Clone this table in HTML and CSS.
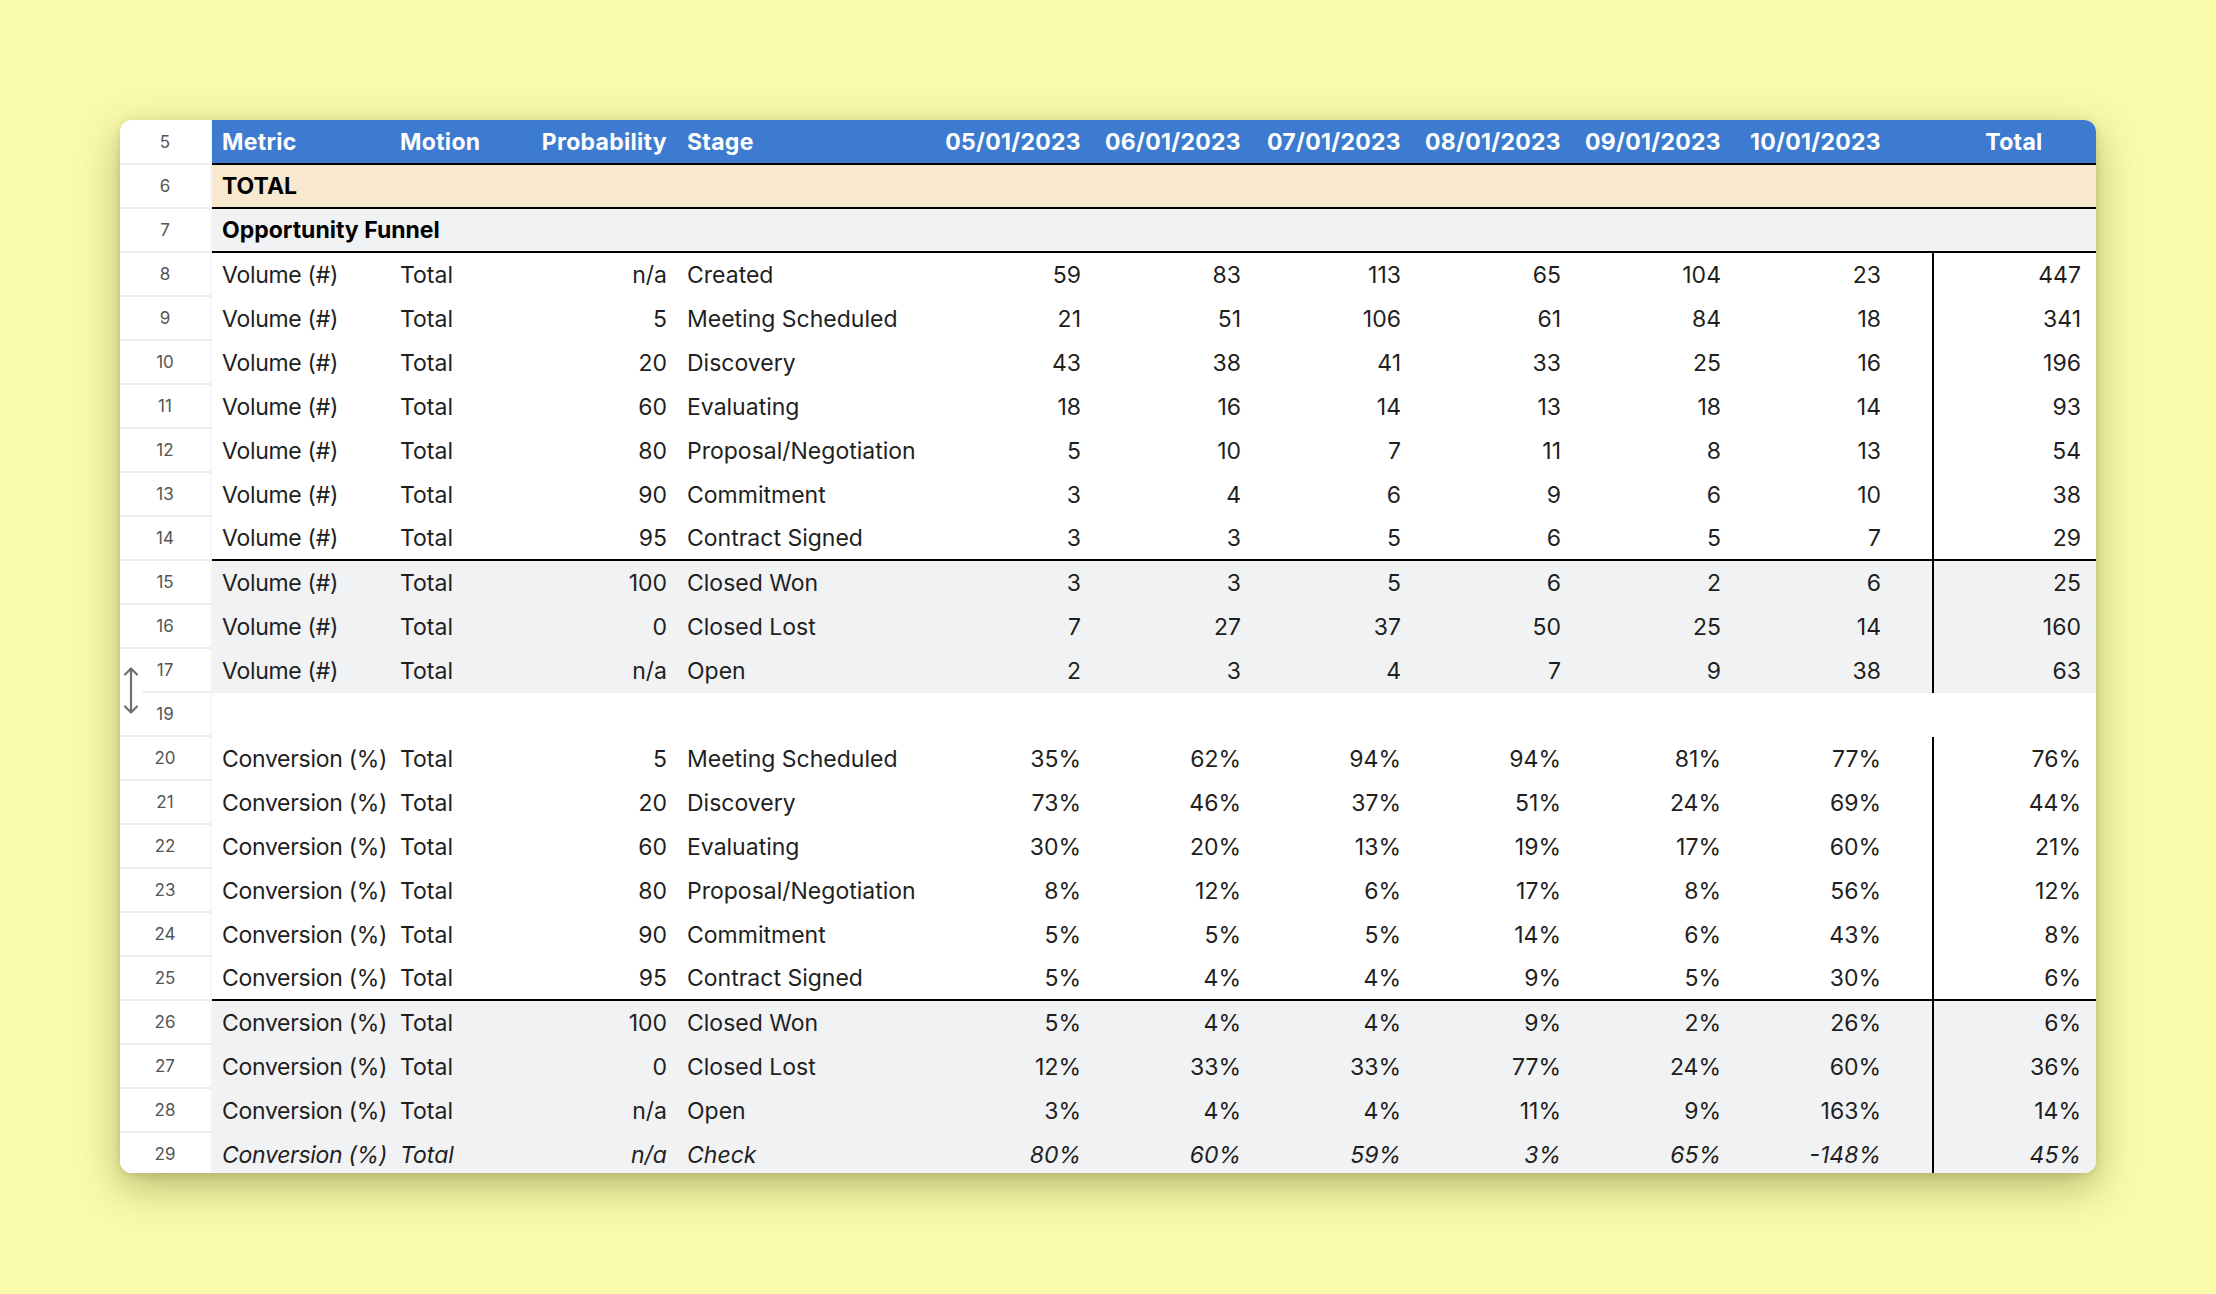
FILE: index.html
```html
<!DOCTYPE html>
<html lang="en">
<head>
<meta charset="utf-8">
<title>Opportunity Funnel</title>
<link rel="stylesheet" href="styles.css">
</head>
<body>
<div class="card">
  <div class="row head">
    <div class="num">5</div>
    <div class="cells">
      <div class="c">Metric</div><div class="c">Motion</div><div class="c r">Probability</div><div class="c">Stage</div>
      <div class="c r">05/01/2023</div><div class="c r">06/01/2023</div><div class="c r">07/01/2023</div><div class="c r">08/01/2023</div><div class="c r">09/01/2023</div><div class="c r">10/01/2023</div><div class="c"></div><div class="c ctr">Total</div>
    </div>
  </div>
  <div class="row">
    <div class="num">6</div>
    <div class="cells beige line"><div class="c b">TOTAL</div></div>
  </div>
  <div class="row">
    <div class="num">7</div>
    <div class="cells gray line"><div class="c b wide">Opportunity Funnel</div></div>
  </div>

  <div class="row"><div class="num">8</div><div class="cells"><div class="c m">Volume (#)</div><div class="c">Total</div><div class="c r">n/a</div><div class="c">Created</div><div class="c r">59</div><div class="c r">83</div><div class="c r">113</div><div class="c r">65</div><div class="c r">104</div><div class="c r">23</div><div class="c"></div><div class="c r tot">447</div></div></div>
  <div class="row"><div class="num">9</div><div class="cells"><div class="c m">Volume (#)</div><div class="c">Total</div><div class="c r">5</div><div class="c">Meeting Scheduled</div><div class="c r">21</div><div class="c r">51</div><div class="c r">106</div><div class="c r">61</div><div class="c r">84</div><div class="c r">18</div><div class="c"></div><div class="c r tot">341</div></div></div>
  <div class="row"><div class="num">10</div><div class="cells"><div class="c m">Volume (#)</div><div class="c">Total</div><div class="c r">20</div><div class="c">Discovery</div><div class="c r">43</div><div class="c r">38</div><div class="c r">41</div><div class="c r">33</div><div class="c r">25</div><div class="c r">16</div><div class="c"></div><div class="c r tot">196</div></div></div>
  <div class="row"><div class="num">11</div><div class="cells"><div class="c m">Volume (#)</div><div class="c">Total</div><div class="c r">60</div><div class="c">Evaluating</div><div class="c r">18</div><div class="c r">16</div><div class="c r">14</div><div class="c r">13</div><div class="c r">18</div><div class="c r">14</div><div class="c"></div><div class="c r tot">93</div></div></div>
  <div class="row"><div class="num">12</div><div class="cells"><div class="c m">Volume (#)</div><div class="c">Total</div><div class="c r">80</div><div class="c">Proposal/Negotiation</div><div class="c r">5</div><div class="c r">10</div><div class="c r">7</div><div class="c r">11</div><div class="c r">8</div><div class="c r">13</div><div class="c"></div><div class="c r tot">54</div></div></div>
  <div class="row"><div class="num">13</div><div class="cells"><div class="c m">Volume (#)</div><div class="c">Total</div><div class="c r">90</div><div class="c">Commitment</div><div class="c r">3</div><div class="c r">4</div><div class="c r">6</div><div class="c r">9</div><div class="c r">6</div><div class="c r">10</div><div class="c"></div><div class="c r tot">38</div></div></div>
  <div class="row"><div class="num">14</div><div class="cells line"><div class="c m">Volume (#)</div><div class="c">Total</div><div class="c r">95</div><div class="c">Contract Signed</div><div class="c r">3</div><div class="c r">3</div><div class="c r">5</div><div class="c r">6</div><div class="c r">5</div><div class="c r">7</div><div class="c"></div><div class="c r tot">29</div></div></div>
  <div class="row"><div class="num">15</div><div class="cells gray"><div class="c m">Volume (#)</div><div class="c">Total</div><div class="c r">100</div><div class="c">Closed Won</div><div class="c r">3</div><div class="c r">3</div><div class="c r">5</div><div class="c r">6</div><div class="c r">2</div><div class="c r">6</div><div class="c"></div><div class="c r tot">25</div></div></div>
  <div class="row"><div class="num">16</div><div class="cells gray"><div class="c m">Volume (#)</div><div class="c">Total</div><div class="c r">0</div><div class="c">Closed Lost</div><div class="c r">7</div><div class="c r">27</div><div class="c r">37</div><div class="c r">50</div><div class="c r">25</div><div class="c r">14</div><div class="c"></div><div class="c r tot">160</div></div></div>
  <div class="row"><div class="num">17</div><div class="cells gray"><div class="c m">Volume (#)</div><div class="c">Total</div><div class="c r">n/a</div><div class="c">Open</div><div class="c r">2</div><div class="c r">3</div><div class="c r">4</div><div class="c r">7</div><div class="c r">9</div><div class="c r">38</div><div class="c"></div><div class="c r tot">63</div></div></div>
  <div class="row"><div class="num">19</div><div class="cells"></div></div>

  <div class="row"><div class="num">20</div><div class="cells"><div class="c m">Conversion (%)</div><div class="c">Total</div><div class="c r">5</div><div class="c">Meeting Scheduled</div><div class="c r">35%</div><div class="c r">62%</div><div class="c r">94%</div><div class="c r">94%</div><div class="c r">81%</div><div class="c r">77%</div><div class="c"></div><div class="c r tot">76%</div></div></div>
  <div class="row"><div class="num">21</div><div class="cells"><div class="c m">Conversion (%)</div><div class="c">Total</div><div class="c r">20</div><div class="c">Discovery</div><div class="c r">73%</div><div class="c r">46%</div><div class="c r">37%</div><div class="c r">51%</div><div class="c r">24%</div><div class="c r">69%</div><div class="c"></div><div class="c r tot">44%</div></div></div>
  <div class="row"><div class="num">22</div><div class="cells"><div class="c m">Conversion (%)</div><div class="c">Total</div><div class="c r">60</div><div class="c">Evaluating</div><div class="c r">30%</div><div class="c r">20%</div><div class="c r">13%</div><div class="c r">19%</div><div class="c r">17%</div><div class="c r">60%</div><div class="c"></div><div class="c r tot">21%</div></div></div>
  <div class="row"><div class="num">23</div><div class="cells"><div class="c m">Conversion (%)</div><div class="c">Total</div><div class="c r">80</div><div class="c">Proposal/Negotiation</div><div class="c r">8%</div><div class="c r">12%</div><div class="c r">6%</div><div class="c r">17%</div><div class="c r">8%</div><div class="c r">56%</div><div class="c"></div><div class="c r tot">12%</div></div></div>
  <div class="row"><div class="num">24</div><div class="cells"><div class="c m">Conversion (%)</div><div class="c">Total</div><div class="c r">90</div><div class="c">Commitment</div><div class="c r">5%</div><div class="c r">5%</div><div class="c r">5%</div><div class="c r">14%</div><div class="c r">6%</div><div class="c r">43%</div><div class="c"></div><div class="c r tot">8%</div></div></div>
  <div class="row"><div class="num">25</div><div class="cells line"><div class="c m">Conversion (%)</div><div class="c">Total</div><div class="c r">95</div><div class="c">Contract Signed</div><div class="c r">5%</div><div class="c r">4%</div><div class="c r">4%</div><div class="c r">9%</div><div class="c r">5%</div><div class="c r">30%</div><div class="c"></div><div class="c r tot">6%</div></div></div>
  <div class="row"><div class="num">26</div><div class="cells gray"><div class="c m">Conversion (%)</div><div class="c">Total</div><div class="c r">100</div><div class="c">Closed Won</div><div class="c r">5%</div><div class="c r">4%</div><div class="c r">4%</div><div class="c r">9%</div><div class="c r">2%</div><div class="c r">26%</div><div class="c"></div><div class="c r tot">6%</div></div></div>
  <div class="row"><div class="num">27</div><div class="cells gray"><div class="c m">Conversion (%)</div><div class="c">Total</div><div class="c r">0</div><div class="c">Closed Lost</div><div class="c r">12%</div><div class="c r">33%</div><div class="c r">33%</div><div class="c r">77%</div><div class="c r">24%</div><div class="c r">60%</div><div class="c"></div><div class="c r tot">36%</div></div></div>
  <div class="row"><div class="num">28</div><div class="cells gray"><div class="c m">Conversion (%)</div><div class="c">Total</div><div class="c r">n/a</div><div class="c">Open</div><div class="c r">3%</div><div class="c r">4%</div><div class="c r">4%</div><div class="c r">11%</div><div class="c r">9%</div><div class="c r">163%</div><div class="c"></div><div class="c r tot">14%</div></div></div>
  <div class="row"><div class="num">29</div><div class="cells gray ital"><div class="c m">Conversion (%)</div><div class="c">Total</div><div class="c r">n/a</div><div class="c">Check</div><div class="c r">80%</div><div class="c r">60%</div><div class="c r">59%</div><div class="c r">3%</div><div class="c r">65%</div><div class="c r">-148%</div><div class="c"></div><div class="c r tot">45%</div></div></div>

  <div class="handle" aria-hidden="true">
    <svg width="24" height="60" viewBox="0 0 24 60"><path d="M12 6.5V50.5M6 12.5L12 6.5L18 12.5M6 44.5L12 50.5L18 44.5" fill="none" stroke="#6e6e6e" stroke-width="2.2" stroke-linecap="round" stroke-linejoin="round"/></svg>
  </div>
</div>
</body>
</html>
```

FILE: styles.css
```css
html, body {
  margin: 0;
  padding: 0;
}
body {
  background: #f9fbaa;
  font-family: Inter, "Liberation Sans", sans-serif;
  color: #1f1f1f;
  padding: 120px 120px 0 120px;
  min-height: 1294px;
  box-sizing: border-box;
}
.card {
  position: relative;
  width: 1976px;
  height: 1053px;
  background: #fff;
  border-radius: 12px;
  overflow: hidden;
  box-shadow: 0 14px 40px rgba(60, 60, 0, 0.34), 0 2px 8px rgba(60, 60, 0, 0.14);
}
.row {
  display: flex;
  height: 44px;
}
.row.head {
  height: 45px;
}
.num {
  width: 92px;
  flex: none;
  box-sizing: border-box;
  border-bottom: 2px solid #ececec;
  border-right: 2px solid #f7f7f7;
  display: flex;
  align-items: center;
  justify-content: center;
  font-size: 17px;
  color: #555;
  background: #fff;
}
.cells {
  flex: 1;
  box-sizing: border-box;
  display: grid;
  grid-template-columns: 178px 130px 157px 254px repeat(6, 160px) 41px 164px;
  align-items: stretch;
  font-size: 23px;
}
.head .cells {
  background: #3d7bd1;
  color: #fff;
  font-weight: 700;
  letter-spacing: 0.3px;
  border-bottom: 2px solid #000;
}
.cells.line {
  border-bottom: 2px solid #000;
}
.cells.beige {
  background: #f9e8d0;
}
.cells.gray {
  background: #f1f2f4;
}
.c {
  padding: 0 10px;
  white-space: nowrap;
  display: flex;
  align-items: center;
}
.m {
  letter-spacing: -0.3px;
}
.r {
  justify-content: flex-end;
}
.ctr {
  justify-content: center;
}
.b {
  font-weight: 700;
  color: #000;
}
.wide {
  grid-column: 1 / span 3;
}
.tot {
  border-left: 2px solid #000;
  padding-right: 15px;
}
.ital {
  font-style: italic;
}
.handle {
  position: absolute;
  left: -1px;
  top: 542px;
  width: 24px;
  height: 60px;
  background: #fff;
  border-radius: 7px;
}
.handle svg {
  display: block;
}
```
